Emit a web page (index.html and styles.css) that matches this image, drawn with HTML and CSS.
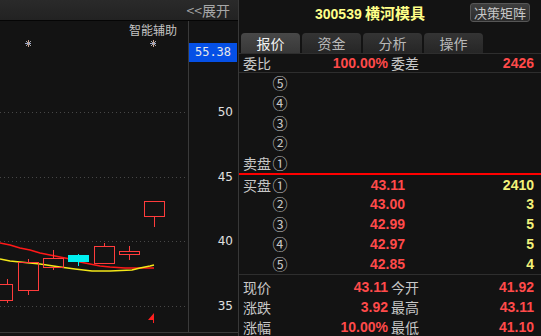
FILE: index.html
```html
<!DOCTYPE html>
<html lang="zh">
<head>
    <meta charset="UTF-8">
    <title>300539 横河模具</title>
    <link rel="stylesheet" href="styles.css">
</head>
<body>
<div class="screen">

    <div class="left">
        <div class="left-head"><span class="expand">&lt;&lt;展开</span></div>
        <div class="left-body">
            <div class="chart">
                <svg class="kline" width="188" height="311" viewBox="0 21 188 311">
                    <!-- grid -->
                    <g stroke="#474747" stroke-dasharray="1 3">
                        <line x1="0" y1="112.5" x2="188" y2="112.5"/>
                        <line x1="0" y1="177.5" x2="188" y2="177.5"/>
                        <line x1="0" y1="241.5" x2="188" y2="241.5"/>
                        <line x1="0" y1="306.5" x2="188" y2="306.5"/>
                    </g>
                    <!-- markers -->
                    <g stroke-width="1">
                        <line x1="25" y1="43.5" x2="31" y2="43.5" stroke="#9aa4c8"/>
                        <line x1="28.5" y1="40" x2="28.5" y2="47" stroke="#c8a090"/>
                        <line x1="26" y1="41" x2="31" y2="46" stroke="#aaa"/>
                        <line x1="31" y1="41" x2="26" y2="46" stroke="#aaa"/>
                        <line x1="150" y1="43.5" x2="156" y2="43.5" stroke="#9aa4c8"/>
                        <line x1="153.5" y1="40" x2="153.5" y2="47" stroke="#c8a090"/>
                        <line x1="151" y1="41" x2="156" y2="46" stroke="#aaa"/>
                        <line x1="156" y1="41" x2="151" y2="46" stroke="#aaa"/>
                    </g>
                    <!-- moving averages -->
                    <polyline fill="none" stroke="#ff1818" stroke-width="1.6"
                        points="0,243 10,245 20,248 30,250 40,253 50,255 60,257 70,259 80,262 90,264 100,266 110,267 125,268 154,268"/>
                    <polyline fill="none" stroke="#f4e818" stroke-width="1.6"
                        points="0,259 10,261 20,262 40,264 60,267 75,269 92,271 110,271 132,270 140,268 145,267 150,266 154,265"/>
                    <!-- candles -->
                    <g fill="none" stroke="#ff3c3c" stroke-width="1">
                        <rect x="-2.5" y="284.5" width="15" height="16"/>
                        <line x1="7.5" y1="279" x2="7.5" y2="284"/>
                        <line x1="7.5" y1="301" x2="7.5" y2="303"/>
                        <rect x="18.5" y="262.5" width="20" height="28"/>
                        <line x1="28.5" y1="259" x2="28.5" y2="262"/>
                        <line x1="28.5" y1="291" x2="28.5" y2="295"/>
                        <rect x="43.5" y="258.5" width="20" height="9"/>
                        <line x1="53.5" y1="250" x2="53.5" y2="258"/>
                        <line x1="53.5" y1="268" x2="53.5" y2="270"/>
                        <rect x="94.5" y="246.5" width="20" height="17"/>
                        <line x1="104.5" y1="243" x2="104.5" y2="246"/>
                        <rect x="119.5" y="251.5" width="20" height="3"/>
                        <line x1="129.5" y1="246" x2="129.5" y2="251"/>
                        <line x1="129.5" y1="255" x2="129.5" y2="260"/>
                        <rect x="144.5" y="201.5" width="20" height="15"/>
                        <line x1="154.5" y1="217" x2="154.5" y2="227"/>
                    </g>
                    <rect x="68" y="255" width="21" height="7" fill="#00f0f0"/>
                    <line x1="78.5" y1="254" x2="78.5" y2="266" stroke="#00f0f0"/>
                    <polygon points="148,320 154,313 154,320" fill="#ff2020"/>
                    <line x1="153.5" y1="320" x2="153.5" y2="323" stroke="#ff2020"/>
                </svg>
                <span class="chart-tag">智能辅助</span>
            </div>
            <div class="axis">
                <span class="axis-now">55.38</span>
                <span class="axis-label p50">50</span>
                <span class="axis-label p45">45</span>
                <span class="axis-label p40">40</span>
                <span class="axis-label p35">35</span>
            </div>
        </div>
        <div class="left-foot"><span>10/17/09 &nbsp; ▲ &nbsp;9:14</span></div>
    </div>

    <div class="right">
        <div class="stock-head">
            <span class="stock-title"><b class="code">300539</b> 横河模具</span>
            <span class="btn">决策矩阵</span>
        </div>

        <div class="tabs">
            <span class="tab active">报价</span>
            <span class="tab">资金</span>
            <span class="tab">分析</span>
            <span class="tab">操作</span>
        </div>

        <div class="info-row ratio">
            <span class="lbl">委比</span>
            <span class="val up">100.00%</span>
            <span class="lbl">委差</span>
            <span class="val up">2426</span>
        </div>

        <div class="book sell">
            <div class="book-row"><span class="lbl"></span><span class="num">⑤</span><span class="val up"></span><span class="vol"></span></div>
            <div class="book-row"><span class="lbl"></span><span class="num">④</span><span class="val up"></span><span class="vol"></span></div>
            <div class="book-row"><span class="lbl"></span><span class="num">③</span><span class="val up"></span><span class="vol"></span></div>
            <div class="book-row"><span class="lbl"></span><span class="num">②</span><span class="val up"></span><span class="vol"></span></div>
            <div class="book-row"><span class="lbl">卖盘</span><span class="num">①</span><span class="val up"></span><span class="vol"></span></div>
        </div>

        <div class="book buy">
            <div class="book-row first"><span class="lbl">买盘</span><span class="num">①</span><span class="val up">43.11</span><span class="vol">2410</span></div>
            <div class="book-row"><span class="lbl"></span><span class="num">②</span><span class="val up">43.00</span><span class="vol">3</span></div>
            <div class="book-row"><span class="lbl"></span><span class="num">③</span><span class="val up">42.99</span><span class="vol">5</span></div>
            <div class="book-row"><span class="lbl"></span><span class="num">④</span><span class="val up">42.97</span><span class="vol">5</span></div>
            <div class="book-row"><span class="lbl"></span><span class="num">⑤</span><span class="val up">42.85</span><span class="vol">4</span></div>
        </div>

        <div class="quote">
            <div class="info-row">
                <span class="lbl">现价</span>
                <span class="val up">43.11</span>
                <span class="lbl">今开</span>
                <span class="val up">41.92</span>
            </div>
            <div class="info-row">
                <span class="lbl">涨跌</span>
                <span class="val up">3.92</span>
                <span class="lbl">最高</span>
                <span class="val up">43.11</span>
            </div>
            <div class="info-row">
                <span class="lbl">涨幅</span>
                <span class="val up">10.00%</span>
                <span class="lbl">最低</span>
                <span class="val up">41.10</span>
            </div>
        </div>
    </div>

</div>
</body>
</html>
```

FILE: styles.css
```css
body {
    margin: 0;
    background-color: #131313;
    color: #c8c8c8;
    font-family: "Noto Sans CJK SC", sans-serif;
    overflow: hidden;
}
.screen {
    display: flex;
    width: 541px;
    height: 336px;
    overflow: hidden;
}

/* left: k-line chart */
.left {
    width: 238px;
    border-right: 1px solid #383838;
    display: flex;
    flex-direction: column;
    flex-shrink: 0;
}
.left-head {
    height: 20px;
    background: linear-gradient(#2a2a2a, #222);
    border-bottom: 1px solid #050505;
    display: flex;
    justify-content: flex-end;
    align-items: center;
    padding-right: 8px;
}
.expand {
    font-size: 14px;
    color: #a8a8a8;
    line-height: 20px;
}
.left-body {
    height: 311px;
    display: flex;
}
.chart {
    width: 188px;
    position: relative;
}
.kline {
    display: block;
}
.chart-tag {
    position: absolute;
    top: 1px;
    right: 11px;
    font-size: 12px;
    color: #c4c4c4;
    line-height: 16px;
}
.axis {
    width: 49px;
    border-left: 1px solid #3a3a3a;
    position: relative;
}
.axis-now {
    position: absolute;
    top: 22px;
    left: 0;
    width: 48px;
    height: 19px;
    line-height: 19px;
    background-color: #0550e6;
    color: #e8e8e8;
    font-family: "DejaVu Sans Mono", monospace;
    font-size: 12px;
    text-align: center;
}
.axis-label {
    position: absolute;
    right: 5px;
    font-family: "DejaVu Sans", sans-serif;
    font-size: 12px;
    line-height: 14px;
    color: #e0e0e0;
}
.p50 { top: 84px; }
.p45 { top: 149px; }
.p40 { top: 213px; }
.p35 { top: 278px; }
.left-foot {
    height: 3px;
    border-top: 1px solid #3a3a3a;
    overflow: hidden;
    padding-left: 98px;
    font-family: "DejaVu Sans", sans-serif;
    font-size: 11px;
    line-height: 14px;
    color: #bbb;
}
.left-foot span {
    display: block;
    margin-top: 1px;
}

/* right: quote panel */
.right {
    width: 302px;
    flex-shrink: 0;
}
.stock-head {
    height: 30px;
    padding-top: 3px;
    display: flex;
    align-items: flex-start;
}
.stock-title {
    margin-left: 76px;
    line-height: 19px;
    font-size: 15px;
    font-weight: bold;
    color: #ffff88;
}
.code {
    font-family: "Liberation Sans", sans-serif;
    font-size: 14px;
}
.btn {
    margin-left: auto;
    margin-right: 11px;
    width: 58px;
    height: 17px;
    line-height: 17px;
    text-align: center;
    font-size: 13px;
    color: #c8c8c8;
    background: linear-gradient(#3e3e3e, #2c2c2c);
    border: 1px solid #565656;
    border-radius: 3px;
}
.tabs {
    display: flex;
    gap: 2px;
    height: 20px;
    padding-left: 2px;
    border-bottom: 1px solid #2e2e2e;
}
.tab {
    width: 59px;
    height: 20px;
    line-height: 20px;
    text-align: center;
    font-size: 14px;
    color: #b8b8b8;
    background: linear-gradient(#343434, #262626);
    border-radius: 4px 4px 0 0;
}
.tab.active {
    color: #f4f4f4;
    background: linear-gradient(#484848, #383838);
}

.info-row {
    display: grid;
    grid-template-columns: 50px 92px 50px 1fr;
    column-gap: 3px;
    height: 20px;
    line-height: 20px;
    padding: 0 7px 0 4px;
    font-size: 14px;
}
.info-row.ratio {
    height: 18px;
    line-height: 18px;
    border-bottom: 1px solid #2e2e2e;
}
.lbl {
    color: #c8c8c8;
}
.val {
    text-align: right;
    font-family: "Liberation Sans", sans-serif;
    font-weight: bold;
    font-size: 14px;
}
.up {
    color: #ff4a4a;
}

.book-row {
    display: grid;
    grid-template-columns: 29px 16px 117px 1fr;
    height: 20px;
    line-height: 20px;
    padding: 0 7px 0 4px;
    font-size: 14px;
}
.book.sell {
    border-bottom: 2px solid #ff0000;
}
.book-row.first {
    height: 19px;
}
.num {
    font-size: 15px;
    color: #c8c8c8;
    text-align: center;
}
.vol {
    text-align: right;
    font-family: "Liberation Sans", sans-serif;
    font-weight: bold;
    font-size: 14px;
    color: #f2f27a;
}
.quote {
    border-top: 1px solid #2e2e2e;
    padding-top: 2px;
}
```
